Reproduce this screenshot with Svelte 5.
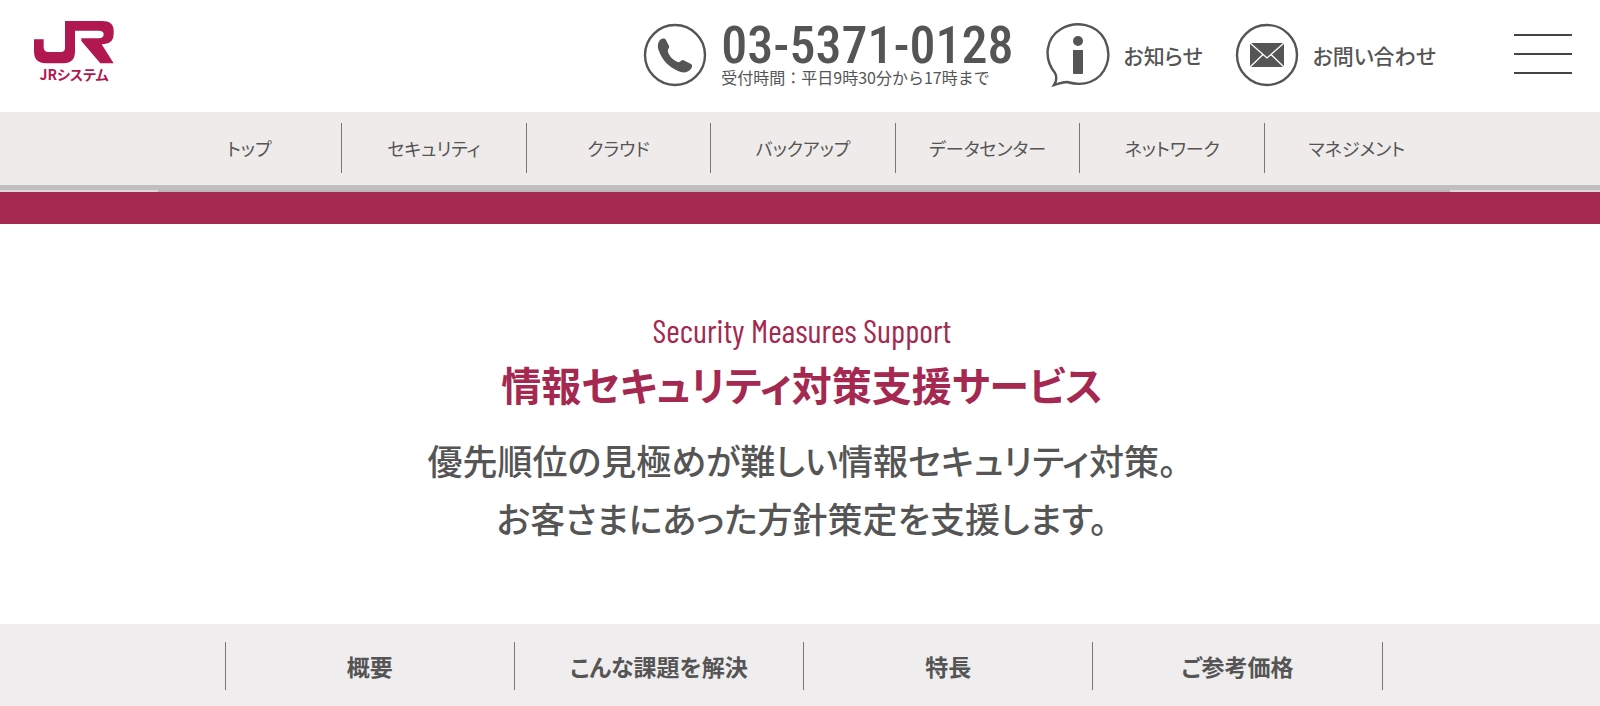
<script>
  const serviceNav = ['トップ', 'セキュリティ', 'クラウド', 'バックアップ', 'データセンター', 'ネットワーク', 'マネジメント']

  const pageNav = [
    { id: 'overview', label: '概要' },
    { id: 'issues', label: 'こんな課題を解決' },
    { id: 'features', label: '特長' },
    { id: 'price', label: 'ご参考価格' },
  ]
</script>

<header>
  <a class="logo" href="/">
    <svg width="80" height="43" viewBox="44 33 240 129" fill="currentColor" aria-hidden="true">
      <path d="M44 88H73V112Q73 126 87 126H124Q137 126 137 113V33H248Q283 33 283 62V72Q283 99 256 102L247 103L283 160H243L186 93V85H238Q253 85 253 73Q253 62 238 62H167V124Q167 160 132 160H80Q44 160 44 124Z" />
    </svg>
    <span>JRシステム</span>
  </a>

  <div class="contact">
    <a class="item tel" href="tel:0353710128">
      <svg width="64" height="64" viewBox="0 0 64 64" aria-hidden="true">
        <circle cx="32" cy="32" r="30" fill="none" stroke="currentColor" stroke-width="2.4" />
        <path fill="currentColor" d="M17 17c2-2 5-2 6 0l3 6c1 2-2 3-1 6 1 4 6 9 10 10 2 1 3-2 5-2l8 4c2 1 1 4-1 6-3 3-8 3-12 1-9-4-16-11-19-20-2-4-1-9 1-11z" />
      </svg>
      <span class="tel-text">
        <span class="number">03-5371-0128</span>
        <span class="hours">受付時間：平日9時30分から17時まで</span>
      </span>
    </a>
    <a class="item" href="/news">
      <svg width="64" height="66" viewBox="0 0 64 66" aria-hidden="true">
        <path fill="none" stroke="currentColor" stroke-width="2.4" d="M9 51C-3 36 0 16 15 7C30-2 51 2 59 18C67 35 60 54 44 60C36 63 28 62 21 60C16 60 12 62 8 63C10 60 11 55 9 51Z" />
        <circle cx="32" cy="19" r="5" fill="currentColor" />
        <path fill="currentColor" d="M27 28H37V51Q37 52 36 52H28Q27 52 27 51Z" />
      </svg>
      <span>お知らせ</span>
    </a>
    <a class="item" href="/contact">
      <svg width="64" height="64" viewBox="0 0 64 64" aria-hidden="true">
        <circle cx="32" cy="32" r="30" fill="none" stroke="currentColor" stroke-width="2.4" />
        <path fill="currentColor" d="M15 20H49V44H15Z" />
        <path fill="none" stroke="#fff" stroke-width="1.3" d="M15 20L32 35L49 20M15 44L28 31.500M49 44L36 31.500" />
      </svg>
      <span>お問い合わせ</span>
    </a>
    <button class="menu" aria-label="メニュー"><i></i><i></i><i></i></button>
  </div>
</header>

<nav class="service-nav">
  <ul>
    {#each serviceNav as label}
      <li><a href="/service">{label}</a></li>
    {/each}
  </ul>
</nav>
<div class="rule"><div></div></div>
<div class="band"></div>

<main>
  <p class="en">Security Measures Support</p>
  <h1>情報セキュリティ対策支援サービス</h1>
  <p class="lead">
    優先順位の見極めが難しい情報セキュリティ対策。<br />
    お客さまにあった方針策定を支援します。
  </p>
</main>

<nav class="page-nav">
  <ul>
    {#each pageNav as item}
      <li><a href="#{item.id}">{item.label}</a></li>
    {/each}
  </ul>
</nav>

<style>
  :global(body) {
    background: #fff;
    color: #555;
    font-family: 'Noto Sans CJK JP', sans-serif;
    font-feature-settings: 'palt';
  }

  a {
    color: inherit;
    text-decoration: none;
  }

  ul {
    display: flex;
    list-style: none;
    margin: 0 auto;
    padding: 0;
  }

  header {
    display: flex;
    justify-content: space-between;
    height: 112px;
    box-sizing: border-box;
    padding: 21px 28px 0 34px;
  }

  .logo {
    display: flex;
    flex-direction: column;
    align-items: center;
    color: #b0184f;
    font-size: 14px;
    font-weight: 700;
    line-height: 20px;
  }

  .logo svg {
    display: block;
  }

  .contact {
    display: flex;
    align-items: flex-start;
    padding-top: 2px;
  }

  .item {
    display: flex;
    align-items: center;
    gap: 14px;
    height: 64px;
    margin-right: 32px;
    font-size: 21px;
    font-weight: 500;
    white-space: nowrap;
  }

  .tel {
    align-items: flex-start;
  }

  .item svg {
    flex: none;
  }

  .tel-text {
    display: flex;
    flex-direction: column;
  }

  .number {
    font-family: 'Roboto Condensed', 'Liberation Sans Narrow', Roboto, sans-serif;
    font-size: 52px;
    font-weight: 500;
    line-height: 46px;
  }

  .hours {
    font-size: 16px;
    font-weight: 400;
    font-feature-settings: normal;
    line-height: 16px;
  }

  .menu {
    display: flex;
    flex-direction: column;
    gap: 17px;
    width: 58px;
    margin-left: 46px;
    padding: 11px 0 0;
    border: none;
    background: none;
    cursor: pointer;
  }

  .menu i {
    width: 100%;
    height: 2px;
    background: #444;
  }

  .service-nav {
    background: #eeebea;
    border-bottom: 5px solid #c0bfbf;
    padding: 11px 0 12px 7px;
  }

  .service-nav ul {
    max-width: 1292px;
  }

  .service-nav li {
    flex: 1;
    border-right: 1px solid #777;
    text-align: center;
    font-size: 18px;
    line-height: 50px;
  }

  .service-nav li:last-child {
    border-right-color: transparent;
  }

  .service-nav a,
  .page-nav a {
    display: block;
  }

  .rule {
    padding-left: 7px;
    background: #dcdada;
  }

  .rule div {
    max-width: 1292px;
    height: 2px;
    margin: 0 auto;
    background: #b9b7b7;
  }

  .band {
    height: 32px;
    background: #a52850;
  }

  main {
    padding: 84px 0 77px 4px;
    text-align: center;
  }

  .en {
    margin: 0;
    color: #a52850;
    font-family: 'Barlow Condensed', 'Roboto Condensed', 'Liberation Sans Narrow', Roboto, sans-serif;
    font-size: 33px;
    font-weight: 400;
    line-height: 44px;
  }

  h1 {
    margin: 0;
    color: #a52850;
    font-size: 40px;
    font-weight: 700;
    line-height: 64px;
  }

  .lead {
    margin: 15px 0 0;
    font-size: 35px;
    font-weight: 500;
    line-height: 58px;
  }

  .page-nav {
    background: #efeded;
    padding: 18px 0 16px 7px;
  }

  .page-nav ul {
    max-width: 1158px;
  }

  .page-nav li {
    flex: 1;
    border-right: 1px solid #777;
    text-align: center;
    font-size: 23px;
    font-weight: 700;
    line-height: 48px;
  }

  .page-nav li:first-child {
    border-left: 1px solid #777;
  }
</style>
